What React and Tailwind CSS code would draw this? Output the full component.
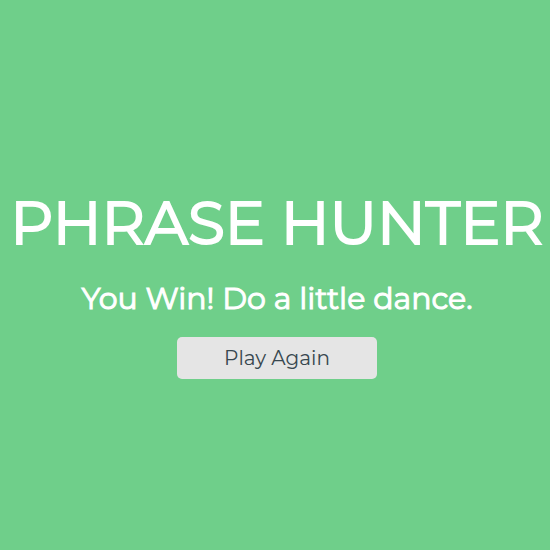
export default function App() {
  return (
    <main className="flex min-h-screen flex-col items-center justify-center overflow-hidden bg-[#6fcf8a] pt-3 pl-1 font-['Montserrat',Inter,sans-serif] text-white">
      <h1 className="whitespace-nowrap text-[60px] leading-[80px] font-normal [-webkit-text-stroke:2px_white]">PHRASE HUNTER</h1>
      <p className="mt-4 text-[30px] leading-10 font-normal [-webkit-text-stroke:1px_white]">You Win! Do a little dance.</p>
      <button type="button" className="mt-[18px] h-[42px] w-[200px] rounded-[5px] bg-[#e5e5e5] text-[20px] text-[#37474f]">Play Again</button>
    </main>
  );
}
